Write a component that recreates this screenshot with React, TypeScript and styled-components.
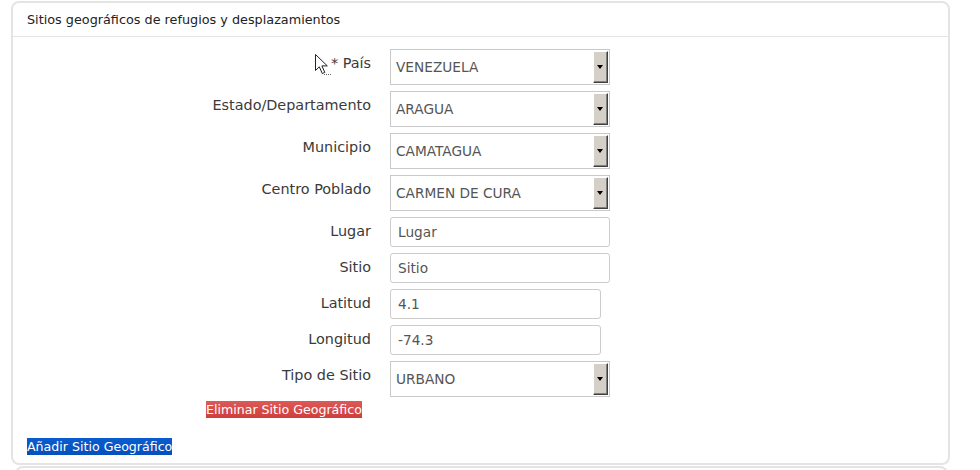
import styled, { createGlobalStyle } from 'styled-components';

const GlobalStyle = createGlobalStyle`
	html, body {
		margin: 0;
		padding: 0;
		background: #fff;
		font-family: "DejaVu Sans", "Liberation Sans", sans-serif;
	}
`;

const Page = styled.div`
	padding: 1px 30px 0 11px;
`;

const Panel = styled.section`
	border: 2px solid #e4e4e4;
	border-radius: 8px;
	background: #fff;
`;

const NextPanel = styled.div`
	margin: 1px 2px 0 4px;
	height: 12px;
	border: 2px solid #e4e4e4;
	border-bottom: none;
	border-radius: 8px 8px 0 0;
`;

const PanelHeader = styled.header`
	height: 33px;
	line-height: 33px;
	padding-left: 14px;
	border-bottom: 1px solid #e5e5e5;
	font-size: 12.8px;
	color: #222;
`;

const PanelBody = styled.div`
	padding: 12px 14px 8px;
`;

const FieldRow = styled.div`
	display: grid;
	grid-template-columns: 344px auto;
	column-gap: 19px;
	margin-bottom: 6px;
`;

const Label = styled.label`
	position: relative;
	text-align: right;
	font-size: 14.4px;
	line-height: 28px;
	color: #3a3a3a;
`;

const Cursor = styled.svg`
	position: absolute;
	top: 5px;
	right: 39px;
`;

const SelectBox = styled.div`
	display: flex;
	align-items: stretch;
	width: 218px;
	height: 34px;
	border: 1px solid #c9c9c9;
	background: #fff;
`;

const SelectValue = styled.span`
	flex: 1;
	padding-left: 5px;
	line-height: 34px;
	font-size: 13.7px;
	color: #555;
`;

const ArrowButton = styled.span`
	display: flex;
	align-items: center;
	justify-content: center;
	width: 13px;
	margin: 1px 1px 1px 0;
	background: #d4d0c8;
	border: 1px solid;
	border-color: #fff #404040 #404040 #fff;
	box-shadow: inset -1px -1px 0 #808080;
`;

const Triangle = styled.span`
	width: 0;
	height: 0;
	border-left: 3.5px solid transparent;
	border-right: 3.5px solid transparent;
	border-top: 4px solid #000;
	margin-right: 1px;
`;

const TextInput = styled.input<{ $width: number }>`
	box-sizing: border-box;
	width: ${(p) => p.$width}px;
	height: 30px;
	padding: 0 7px;
	border: 1px solid #ccc;
	border-radius: 3px;
	font-family: "DejaVu Sans", "Liberation Sans", sans-serif;
	font-size: 13.7px;
	color: #555;
	outline: none;
`;

const ActionLine = styled.div<{ $indent: number; $top: number }>`
	padding-left: ${(p) => p.$indent}px;
	margin-top: ${(p) => p.$top}px;
	line-height: 16px;
`;

const ActionLink = styled.a<{ $tone: 'danger' | 'primary' }>`
	display: inline-block;
	padding: 0;
	font-size: 12.6px;
	line-height: 17px;
	color: #fff;
	text-decoration: none;
	background: ${(p) =>
		p.$tone === 'danger'
			? 'linear-gradient(#dc5a57, #cf3f3c)'
			: 'linear-gradient(#0a5ccf, #0450bd)'};
	cursor: pointer;
`;

type SelectField = { label: string; value: string; required?: boolean };
type TextField = { label: string; value: string; width: number };

const locationSelects: SelectField[] = [
	{ label: 'País', value: 'VENEZUELA', required: true },
	{ label: 'Estado/Departamento', value: 'ARAGUA' },
	{ label: 'Municipio', value: 'CAMATAGUA' },
	{ label: 'Centro Poblado', value: 'CARMEN DE CURA' },
];

const textFields: TextField[] = [
	{ label: 'Lugar', value: 'Lugar', width: 220 },
	{ label: 'Sitio', value: 'Sitio', width: 220 },
	{ label: 'Latitud', value: '4.1', width: 211 },
	{ label: 'Longitud', value: '-74.3', width: 211 },
];

function PointerCursor() {
	return (
		<Cursor width="17" height="22" viewBox="0 0 17 22">
			<path
				d="M0.5 0.5 L0.5 16.5 L4.3 12.8 L7.3 19.5 L9.8 18.4 L6.9 11.9 L12.3 11.9 Z"
				fill="#fff"
				stroke="#222"
				strokeWidth="1"
				strokeLinejoin="miter"
			/>
			<g fill="#666">
				<rect x="9" y="20" width="1" height="1" />
				<rect x="11" y="20" width="1" height="1" />
				<rect x="13" y="20" width="1" height="1" />
				<rect x="15" y="20" width="1" height="1" />
			</g>
		</Cursor>
	);
}

function Select({ field }: { field: SelectField }) {
	return (
		<FieldRow>
			<Label>
				{field.required && <PointerCursor />}
				{field.required ? `* ${field.label}` : field.label}
			</Label>
			<SelectBox>
				<SelectValue>{field.value}</SelectValue>
				<ArrowButton>
					<Triangle />
				</ArrowButton>
			</SelectBox>
		</FieldRow>
	);
}

export default function App() {
	return (
		<>
			<GlobalStyle />
			<Page>
				<Panel>
					<PanelHeader>Sitios geográficos de refugios y desplazamientos</PanelHeader>
					<PanelBody>
						{locationSelects.map((field) => (
							<Select key={field.label} field={field} />
						))}
						{textFields.map((field) => (
							<FieldRow key={field.label}>
								<Label>{field.label}</Label>
								<TextInput $width={field.width} defaultValue={field.value} />
							</FieldRow>
						))}
						<Select field={{ label: 'Tipo de Sitio', value: 'URBANO' }} />
						<ActionLine $indent={179} $top={-2}>
							<ActionLink $tone="danger">Eliminar Sitio Geográfico</ActionLink>
						</ActionLine>
						<ActionLine $indent={0} $top={20}>
							<ActionLink $tone="primary">Añadir Sitio Geográfico</ActionLink>
						</ActionLine>
					</PanelBody>
				</Panel>
				<NextPanel />
			</Page>
		</>
	);
}
